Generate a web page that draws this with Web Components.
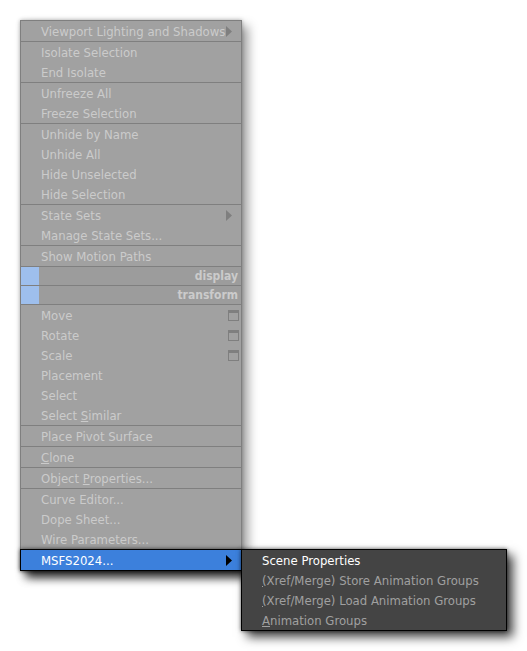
<!DOCTYPE html>
<html lang="en">
<head>
<meta charset="utf-8">
<title>Quad menu</title>
<style>
  body {
    box-sizing: border-box;
    min-height: 100vh;
    margin: 0;
    padding: 20px;
    background: #fff;
    font: 13px/20px "DejaVu Sans Condensed", "DejaVu Sans", sans-serif;
  }
</style>
</head>
<body>

<quad-menu dimmed aria-label="Display and transform">
  <menu-item icon="arrow">Viewport Lighting and Shadows</menu-item>
  <menu-line></menu-line>
  <menu-item>Isolate Selection</menu-item>
  <menu-item>End Isolate</menu-item>
  <menu-line></menu-line>
  <menu-item>Unfreeze All</menu-item>
  <menu-item>Freeze Selection</menu-item>
  <menu-line></menu-line>
  <menu-item>Unhide by Name</menu-item>
  <menu-item>Unhide All</menu-item>
  <menu-item>Hide Unselected</menu-item>
  <menu-item>Hide Selection</menu-item>
  <menu-line></menu-line>
  <menu-item icon="arrow">State Sets</menu-item>
  <menu-item>Manage State Sets...</menu-item>
  <menu-line></menu-line>
  <menu-item>Show Motion Paths</menu-item>
  <menu-line></menu-line>
  <menu-title>display</menu-title>
  <menu-line></menu-line>
  <menu-title>transform</menu-title>
  <menu-line></menu-line>
  <menu-item icon="options">Move</menu-item>
  <menu-item icon="options">Rotate</menu-item>
  <menu-item icon="options">Scale</menu-item>
  <menu-item>Placement</menu-item>
  <menu-item>Select</menu-item>
  <menu-item>Select <u>S</u>imilar</menu-item>
  <menu-line></menu-line>
  <menu-item>Place Pivot Surface</menu-item>
  <menu-line></menu-line>
  <menu-item><u>C</u>lone</menu-item>
  <menu-line></menu-line>
  <menu-item>Object <u>P</u>roperties...</menu-item>
  <menu-line></menu-line>
  <menu-item>Curve Editor...</menu-item>
  <menu-item>Dope Sheet...</menu-item>
  <menu-item>Wire Parameters...</menu-item>
  <menu-item icon="arrow" active>
    MSFS2024...
    <quad-menu slot="submenu" aria-label="MSFS2024">
      <menu-item current>Scene Properties</menu-item>
      <menu-item><u>(</u>Xref/Merge) Store Animation Groups</menu-item>
      <menu-item><u>(</u>Xref/Merge) Load Animation Groups</menu-item>
      <menu-item><u>A</u>nimation Groups</menu-item>
    </quad-menu>
  </menu-item>
</quad-menu>

<template id="quad-menu">
  <style>
    :host {
      --line: #000;
      --text: #a0a0a0;
      display: flex;
      flex-direction: column;
      box-sizing: border-box;
      width: max-content;
      min-width: 266px;
      border: 1px solid var(--line);
      background: #444;
      box-shadow: 6px 6px 10px rgba(0, 0, 0, .75), 0 0 4px rgba(0, 0, 0, .6);
    }

    :host([dimmed]) {
      --line: #7f7f7f;
      --text: #cbcbcb;
      min-width: 222px;
      background: #a1a1a1;
      box-shadow: 6px 6px 10px rgba(0, 0, 0, .38), 0 0 4px rgba(0, 0, 0, .3);
    }
  </style>
  <slot></slot>
</template>

<template id="menu-item">
  <style>
    :host {
      display: block;
      position: relative;
    }

    button {
      display: flex;
      align-items: center;
      justify-content: space-between;
      width: 100%;
      height: 20px;
      margin: 0;
      padding: 0 2px 0 20px;
      border: 0;
      background: none;
      color: var(--text);
      font: inherit;
      text-align: left;
      white-space: nowrap;
    }

    span {
      padding-top: 2px;
    }

    svg {
      display: none;
      flex: none;
      margin-top: 1px;
      fill: var(--line);
    }

    .arrow {
      margin-right: 7px;
    }

    :host([icon="arrow"]) .arrow,
    :host([icon="options"]) .options {
      display: block;
    }

    :host([current]) button {
      color: #fff;
    }

    :host([active]) {
      --line: #000;
      z-index: 1;
      margin: 0 -1px -1px;
      border: 1px solid #000;
      background: #3c80dc;
      box-shadow: 6px 6px 10px rgba(0, 0, 0, .75), 0 0 4px rgba(0, 0, 0, .6);
    }

    :host([active]) button {
      color: #fff;
    }

    ::slotted(quad-menu) {
      position: absolute;
      top: -1px;
      left: 100%;
    }
  </style>
  <button type="button" role="menuitem">
    <span><slot></slot></span>
    <svg class="arrow" width="6" height="11" viewBox="0 0 6 11" aria-hidden="true">
      <path d="M0 0L6 5.5L0 11Z"/>
    </svg>
    <svg class="options" width="11" height="11" viewBox="0 0 11 11" aria-hidden="true">
      <path fill-rule="evenodd" d="M0 0H11V11H0ZM1 3V10H10V3Z"/>
    </svg>
  </button>
  <slot name="submenu"></slot>
</template>

<template id="menu-title">
  <style>
    :host {
      display: block;
      padding-right: 3px;
      border-left: 18px solid #9ebfed;
      background: #9c9c9c;
      color: #cbcbcb;
      font-size: 12px;
      font-weight: bold;
      line-height: 18px;
      text-align: right;
    }
  </style>
  <slot></slot>
</template>

<template id="menu-line">
  <style>
    :host {
      display: block;
      height: 1px;
      background: var(--line);
    }
  </style>
</template>

<script>
  class MenuPart extends HTMLElement {
    constructor() {
      super();
      const template = document.getElementById(this.localName);
      this.attachShadow({ mode: 'open' });
      this.shadowRoot.append(template.content.cloneNode(true));
    }
  }

  class QuadMenu extends MenuPart {
    connectedCallback() {
      this.setAttribute('role', 'menu');
    }
  }

  class MenuItem extends MenuPart {
    connectedCallback() {
      const button = this.shadowRoot.querySelector('button');
      if (this.getAttribute('icon') === 'arrow') {
        button.setAttribute('aria-haspopup', 'menu');
        button.setAttribute('aria-expanded', this.hasAttribute('active'));
      }
    }
  }

  class MenuTitle extends MenuPart {}

  class MenuLine extends MenuPart {
    connectedCallback() {
      this.setAttribute('role', 'separator');
    }
  }

  customElements.define('quad-menu', QuadMenu);
  customElements.define('menu-item', MenuItem);
  customElements.define('menu-title', MenuTitle);
  customElements.define('menu-line', MenuLine);
</script>
</body>
</html>
